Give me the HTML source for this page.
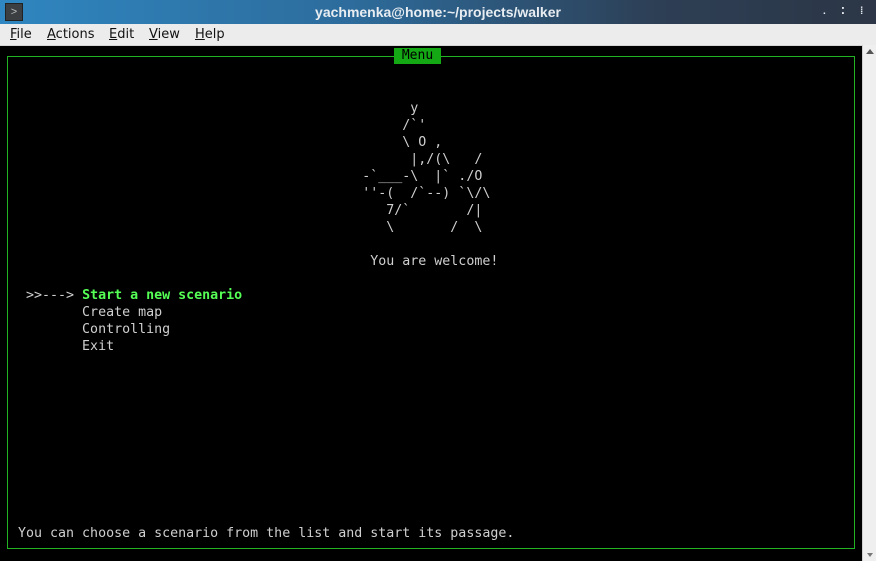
<!DOCTYPE html>
<html><head><style>
html,body{margin:0;padding:0;width:876px;height:561px;overflow:hidden;background:#000;font-family:"Liberation Sans","DejaVu Sans",sans-serif}
#title{position:absolute;left:0;top:0;width:876px;height:24px;background:linear-gradient(90deg,#2f86c0 0%,#2d6c9c 40%,#2d3f55 75%,#2c3646 100%);color:#e8edf2;font-weight:bold;font-size:14px;text-align:center;line-height:24px}
#ico{position:absolute;left:5px;top:3px;width:16px;height:16px;background:#3b3f42;border:1px solid #222;color:#bbb;font-size:11px;line-height:16px;text-align:center;font-weight:normal}
#menu{position:absolute;left:0;top:24px;width:876px;height:21px;background:#ececec;border-bottom:1px solid #d6d6d6;font-family:"DejaVu Sans",sans-serif;font-size:13px;line-height:21px;color:#111}
#menu span{position:absolute;top:0}
#menu u{text-decoration:underline}
#sb{position:absolute;left:862px;top:45px;width:14px;height:516px;background:#efefef;border-left:1px solid #d0d0d0}
#term{position:absolute;left:2px;top:66px;margin:0;font-family:"DejaVu Sans Mono","Liberation Mono",monospace;font-size:13.3px;line-height:17px;color:#cfcfcf;white-space:pre}
#box{position:absolute;left:7px;top:56px;width:846px;height:491px;border:1px solid #22b322}
#lbl{position:absolute;left:394px;top:48px;width:47px;height:16px;background:#14a814;color:#000;font-family:"DejaVu Sans Mono",monospace;font-size:13px;line-height:16px;text-align:center}
.g{color:#55ff55;font-weight:bold}
</style></head><body>
<div id="title"><div id="ico">&gt;</div>yachmenka@home:~/projects/walker
<span style="position:absolute;left:823px;top:0;font-size:10px">.</span>
<span style="position:absolute;left:841px;top:0;font-size:10px">⁚</span>
<span style="position:absolute;left:860px;top:0;font-size:10px">⁞</span></div>
<div id="menu"><span style="left:10px"><u>F</u>ile</span><span style="left:47px"><u>A</u>ctions</span><span style="left:109px"><u>E</u>dit</span><span style="left:149px"><u>V</u>iew</span><span style="left:195px"><u>H</u>elp</span></div>
<div id="sb"><div style="position:absolute;left:3px;top:4px;width:0;height:0;border-left:4px solid transparent;border-right:4px solid transparent;border-bottom:5px solid #555"></div><div style="position:absolute;left:4px;bottom:4px;width:0;height:0;border-left:3px solid transparent;border-right:3px solid transparent;border-top:4px solid #777"></div></div>
<div id="box"></div>
<div id="lbl">Menu</div>
<pre id="term">


                                                   y
                                                  /`'
                                                  \ O ,
                                                   |,/(\   /
                                             -`___-\  |` ./O
                                             ''-(  /`--) `\/\
                                                7/`       /|
                                                \       /  \

                                              You are welcome!

   &gt;&gt;---&gt; <span class="g">Start a new scenario</span>
          Create map
          Controlling
          Exit










  You can choose a scenario from the list and start its passage.</pre>
</body></html>
